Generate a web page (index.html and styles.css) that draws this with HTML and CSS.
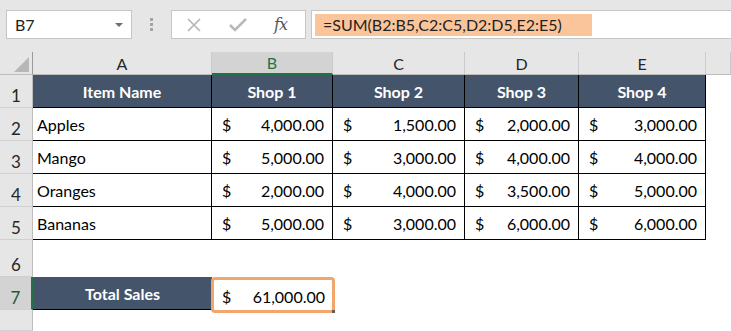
FILE: index.html
```html
<!DOCTYPE html>
<html lang="en">
<head>
    <meta charset="UTF-8">
    <meta name="viewport" content="width=device-width, initial-scale=1.0">
    <title>Total Sales</title>
    <link rel="stylesheet" href="styles.css">
</head>
<body>
    <div class="toolbar">
        <div class="namebox">
            <span>B7</span>
            <span class="arrow"></span>
        </div>
        <div class="dots"><i></i><i></i><i></i></div>
        <div class="icons">
            <svg class="icon" width="16" height="16" viewBox="0 0 16 16">
                <path d="M2 2 L14 14 M14 2 L2 14" stroke="#b4b4b4" stroke-width="1.6" fill="none"/>
            </svg>
            <svg class="icon" width="18" height="16" viewBox="0 0 18 16">
                <path d="M1 8 L6 13 L17 2" stroke="#b8b8b8" stroke-width="2.6" fill="none"/>
            </svg>
            <span class="fx">fx</span>
        </div>
        <div class="formula">
            <span class="hl">=SUM(B2:B5,C2:C5,D2:D5,E2:E5)</span>
        </div>
    </div>

    <div class="sheet">
        <div class="ch corner"><span class="tri"></span></div>
        <div class="ch">A</div>
        <div class="ch on">B</div>
        <div class="ch">C</div>
        <div class="ch">D</div>
        <div class="ch">E</div>
        <div class="ch"></div>

        <div class="rh">1</div>
        <div class="t hd">Item Name</div>
        <div class="t hd">Shop 1</div>
        <div class="t hd">Shop 2</div>
        <div class="t hd">Shop 3</div>
        <div class="t hd">Shop 4</div>
        <div class="c"></div>

        <div class="rh">2</div>
        <div class="t">Apples</div>
        <div class="t money"><span>$</span><span>4,000.00</span></div>
        <div class="t money"><span>$</span><span>1,500.00</span></div>
        <div class="t money"><span>$</span><span>2,000.00</span></div>
        <div class="t money"><span>$</span><span>3,000.00</span></div>
        <div class="c"></div>

        <div class="rh">3</div>
        <div class="t">Mango</div>
        <div class="t money"><span>$</span><span>5,000.00</span></div>
        <div class="t money"><span>$</span><span>3,000.00</span></div>
        <div class="t money"><span>$</span><span>4,000.00</span></div>
        <div class="t money"><span>$</span><span>4,000.00</span></div>
        <div class="c"></div>

        <div class="rh">4</div>
        <div class="t">Oranges</div>
        <div class="t money"><span>$</span><span>2,000.00</span></div>
        <div class="t money"><span>$</span><span>4,000.00</span></div>
        <div class="t money"><span>$</span><span>3,500.00</span></div>
        <div class="t money"><span>$</span><span>5,000.00</span></div>
        <div class="c"></div>

        <div class="rh">5</div>
        <div class="t">Bananas</div>
        <div class="t money"><span>$</span><span>5,000.00</span></div>
        <div class="t money"><span>$</span><span>3,000.00</span></div>
        <div class="t money"><span>$</span><span>6,000.00</span></div>
        <div class="t money"><span>$</span><span>6,000.00</span></div>
        <div class="c"></div>

        <div class="rh">6</div>
        <div class="c"></div>
        <div class="c"></div>
        <div class="c"></div>
        <div class="c"></div>
        <div class="c"></div>
        <div class="c"></div>

        <div class="rh on">7</div>
        <div class="t hd total">Total Sales</div>
        <div class="c sel">
            <div class="pick"><span>$</span><span>61,000.00</span><i class="handle"></i></div>
        </div>
        <div class="c"></div>
        <div class="c"></div>
        <div class="c"></div>
        <div class="c"></div>

        <div class="rh"></div>
        <div class="c"></div>
        <div class="c"></div>
        <div class="c"></div>
        <div class="c"></div>
        <div class="c"></div>
        <div class="c"></div>
    </div>
</body>
</html>
```

FILE: styles.css
```css
* {
    box-sizing: border-box;
}
body {
    margin: 0;
    width: 731px;
    height: 331px;
    overflow: hidden;
    font-family: Lato, "Liberation Sans", sans-serif;
    background-color: #ffffff;
    color: #000;
}
.toolbar {
    display: flex;
    align-items: flex-start;
    height: 52px;
    padding-top: 10px;
    background-color: #e6e6e6;
}
.namebox {
    display: flex;
    align-items: center;
    justify-content: space-between;
    width: 126px;
    height: 29px;
    margin-left: 6px;
    padding: 0 8px 0 8px;
    background-color: #fff;
    border: 1px solid #c6c6c6;
    font-size: 16px;
    color: #222;
}
.arrow {
    width: 0;
    height: 0;
    border-left: 4px solid transparent;
    border-right: 4px solid transparent;
    border-top: 4px solid #6f6f6f;
}
.dots {
    display: flex;
    flex-direction: column;
    align-items: center;
    gap: 2px;
    width: 39px;
    padding-top: 8px;
}
.dots i {
    width: 3px;
    height: 3px;
    background-color: #a4a4a4;
}
.icons {
    display: flex;
    align-items: center;
    width: 135px;
    height: 29px;
    margin-right: 5px;
    padding-left: 14px;
    background-color: #fff;
    border: 1px solid #c6c6c6;
}
.icon {
    margin-right: 27px;
}
.fx {
    font-family: "DejaVu Serif", "Liberation Serif", serif;
    font-style: italic;
    font-size: 16px;
    color: #555;
    letter-spacing: -1px;
}
.formula {
    flex: 1;
    display: flex;
    align-items: center;
    height: 29px;
    padding-left: 3px;
    background-color: #fff;
    border: 1px solid #c6c6c6;
    border-right: none;
}
.hl {
    display: flex;
    align-items: center;
    height: 22px;
    width: 277px;
    padding-left: 8px;
    background-color: #fbc59c;
    font-size: 16px;
    color: #222;
}
.sheet {
    display: grid;
    grid-template-columns: 33px 179px 121px 132px 114px 127px 25px;
    grid-template-rows: 23px 33px 33px 33px 33px 33px 37px 33px 21px;
    font-size: 16px;
}
.ch {
    display: flex;
    align-items: center;
    justify-content: center;
    background-color: #e6e6e6;
    border-right: 1px solid #cbcbcb;
    border-bottom: 1px solid #bcbcbc;
    font-size: 16px;
    color: #262626;
}
.ch:last-child {
    border-right: none;
}
.ch.on {
    background-color: #d3d3d3;
    border-bottom: 2px solid #217346;
    color: #217346;
}
.corner {
    position: relative;
    border-right-color: #9a9a9a;
}
.tri {
    position: absolute;
    right: 3px;
    bottom: 2px;
    width: 15px;
    height: 15px;
    background-color: #b7b7b7;
    clip-path: polygon(100% 0, 100% 100%, 0 100%);
}
.rh {
    display: flex;
    align-items: flex-end;
    justify-content: center;
    padding-bottom: 1px;
    background-color: #e6e6e6;
    border-right: 1px solid #bdbdbd;
    border-bottom: 1px solid #d0d0d0;
    font-size: 17px;
    color: #262626;
}
.rh.on {
    background-color: #d3d3d3;
    border-right: 2px solid #217346;
    color: #1e5c3a;
}
.t {
    display: flex;
    align-items: flex-end;
    padding: 0 4px 6px 4px;
    border-right: 1px solid #000;
    border-bottom: 1px solid #000;
    white-space: nowrap;
}
.hd {
    justify-content: center;
    background-color: #44546a;
    color: #fff;
    font-weight: bold;
}
.money {
    justify-content: space-between;
    padding: 0 8px 6px 10px;
}
.total {
    border-right: none;
}
.sel {
    display: flex;
}
.pick {
    position: relative;
    flex: 1;
    display: flex;
    align-items: flex-end;
    justify-content: space-between;
    margin: 0 -2px -3px -1px;
    padding: 0 7px 4px 8px;
    background-color: #fff;
    border: 3px solid #f2a66c;
    border-radius: 4px;
}
.handle {
    position: absolute;
    right: -3px;
    bottom: -3px;
    width: 3px;
    height: 3px;
    background-color: #6b5a4c;
}
```
